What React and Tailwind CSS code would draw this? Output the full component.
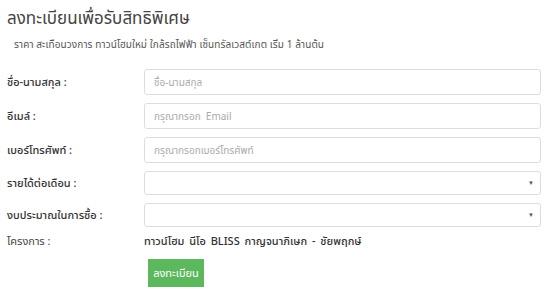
export default function App() {
  const Row = ({ label, children }) => (
    <div className="flex items-center">
      <div className="w-[144px] shrink-0 pl-[7px] text-[11px] text-[#333] font-medium">{label}</div>
      <div className="w-[397px]">{children}</div>
    </div>
  );
  const Input = ({ ph }) => (
    <div className="h-[26px] border border-[#ddd] rounded-[3px] px-[9px] flex items-center text-[10px] text-[#aaa] whitespace-pre">{ph}</div>
  );
  const Select = () => (
    <div className="h-[24px] border border-[#ddd] rounded-[3px] px-[9px] flex items-center justify-end">
      <span className="text-[6px] text-[#555] mr-[-3px]">▼</span>
    </div>
  );
  return (
    <div className="w-[550px] h-[293px] bg-white overflow-hidden font-['Noto_Sans','Noto_Sans_Thai',sans-serif] text-[#333]">
      <div className="pl-[7px] pt-[6px] text-[17px] leading-[24px] text-[#444]">ลงทะเบียนเพื่อรับสิทธิพิเศษ</div>
      <div className="pl-[14px] mt-[7px] text-[10px] tracking-[0.1px] leading-[14px] text-[#555]">ราคา สะเทือนวงการ ทาวน์โฮมใหม่ ใกล้รถไฟฟ้า เซ็นทรัลเวสต์เกต เริ่ม 1 ล้านต้น</div>
      <div className="mt-[18px] flex flex-col gap-[8px]">
        <Row label="ชื่อ-นามสกุล :"><Input ph="ชื่อ-นามสกุล" /></Row>
        <Row label="อีเมล์ :"><Input ph="กรุณากรอก  Email" /></Row>
        <Row label="เบอร์โทรศัพท์ :"><Input ph="กรุณากรอกเบอร์โทรศัพท์" /></Row>
        <Row label="รายได้ต่อเดือน :"><Select /></Row>
        <Row label="งบประมาณในการซื้อ :"><Select /></Row>
      </div>
      <div className="flex items-center mt-[4px] h-[20px]">
        <div className="w-[144px] pl-[7px] text-[11px] text-[#444]">โครงการ :</div>
        <div className="text-[11px] font-medium text-[#333] [word-spacing:2px]">ทาวน์โฮม นีโอ BLISS กาญจนาภิเษก - ชัยพฤกษ์</div>
      </div>
      <div className="pl-[148px] mt-[8px]">
        <div className="w-[56px] h-[28px] bg-[#5cb85c] text-white text-[11px] flex items-center justify-center">ลงทะเบียน</div>
      </div>
    </div>
  );
}
